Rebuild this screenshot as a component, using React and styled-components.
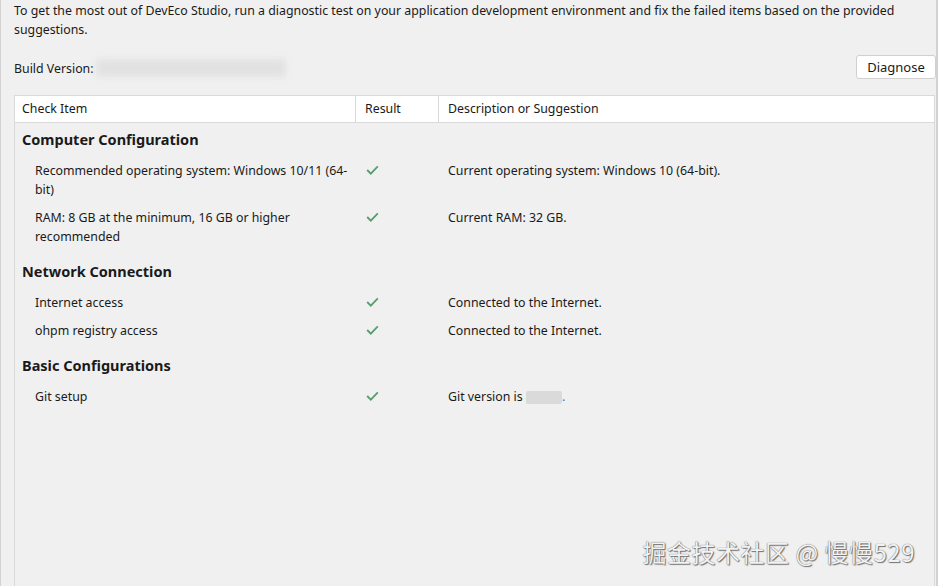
import React from 'react';
import styled, { createGlobalStyle } from 'styled-components';

const GlobalStyle = createGlobalStyle`
  html, body {
    margin: 0;
    padding: 0;
    background: #f0f0f0;
  }
  body {
    font-family: "Noto Sans", "Open Sans", sans-serif;
    font-size: 12.35px;
    color: #1a1a1a;
  }
`;

const Page = styled.div`
  position: relative;
  box-sizing: border-box;
  width: 938px;
  height: 586px;
  background: #f0f0f0;
  border-left: 1px solid #d2d2d2;
  border-right: 2px solid #d2d2d2;
  padding: 0 1px 0 13px;
  display: flex;
  flex-direction: column;
  overflow: hidden;
`;

const Intro = styled.p`
  margin: 0;
  padding-top: 1px;
  line-height: 19px;
  padding-right: 20px;
`;

const Toolbar = styled.div`
  display: flex;
  align-items: center;
  justify-content: space-between;
  margin-top: 16px;
  height: 24px;
`;

const BuildLabel = styled.div`
  display: flex;
  align-items: center;
  gap: 2px;
  padding-top: 2px;
`;

const Blurred = styled.span`
  display: inline-block;
  width: ${p => p.$w}px;
  height: ${p => p.$h}px;
  background: ${p => p.$c || '#dcdcdc'};
  filter: blur(${p => p.$blur || 0}px);
  border-radius: 2px;
  vertical-align: middle;
`;

const Button = styled.button`
  box-sizing: border-box;
  width: 80px;
  height: 24px;
  margin-right: -1px;
  background: #fff;
  border: 1px solid #d0d0d0;
  border-radius: 3px;
  font: inherit;
  font-size: 13px;
  color: #1a1a1a;
  padding: 0 0 1px;
`;

const Table = styled.div`
  margin-top: 16px;
  flex: 1;
  display: flex;
  flex-direction: column;
  border: 1px solid #d9d9d9;
  border-bottom: none;
`;

const Row = styled.div`
  display: grid;
  grid-template-columns: 341px 83px 1fr;
`;

const HeaderRow = styled(Row)`
  background: #fff;
  border-bottom: 1px solid #d9d9d9;
  height: 26px;
`;

const HeaderCell = styled.div`
  display: flex;
  align-items: center;
  padding-left: ${p => p.$pl || 9}px;
  padding-bottom: 1px;
  border-right: ${p => (p.$last ? 'none' : '1px solid #d9d9d9')};
`;

const Body = styled.div`
  padding-top: 5px;
`;

const SectionTitle = styled.div`
  font-weight: 700;
  font-size: 14.5px;
  line-height: 22px;
  padding-left: 7px;
  margin-top: ${p => (p.$first ? 0 : 10)}px;
  margin-bottom: 6px;
`;

const ItemRow = styled(Row)`
  line-height: 19px;
  padding: 4.5px 0;
`;

const ItemCell = styled.div`
  padding-left: 20px;
  padding-right: 6px;
`;

const ResultCell = styled.div`
  display: flex;
  align-items: center;
  height: 19px;
  padding-left: 10px;
`;

const DescCell = styled.div`
  padding-left: 9px;
`;

const Dot = styled.span`
  color: #3b6fd8;
`;

const Watermark = styled.div`
  position: absolute;
  right: 21px;
  bottom: 19px;
  font-family: "Noto Sans CJK SC", "Noto Sans", sans-serif;
  font-size: 24px;
  line-height: 30px;
  color: #f2f2f2;
  letter-spacing: 0.5px;
  text-shadow: 0 0 1px #444, 1px 1px 1px #777;
`;

const Check = () => (
  <svg width="13" height="10" viewBox="0 0 13 10">
    <polyline points="1.2,5 4.8,8.6 11.8,1.4" fill="none" stroke="#5a9c6e" strokeWidth="1.8" />
  </svg>
);

const sections = [
  {
    title: 'Computer Configuration',
    items: [
      ['Recommended operating system: Windows 10/11 (64-bit)', 'Current operating system: Windows 10 (64-bit).'],
      ['RAM: 8 GB at the minimum, 16 GB or higher recommended', 'Current RAM: 32 GB.'],
    ],
  },
  {
    title: 'Network Connection',
    items: [
      ['Internet access', 'Connected to the Internet.'],
      ['ohpm registry access', 'Connected to the Internet.'],
    ],
  },
  {
    title: 'Basic Configurations',
    items: [['Git setup', 'git']],
  },
];

export default function App() {
  return (
    <>
      <GlobalStyle />
      <Page>
        <Intro>
          To get the most out of DevEco Studio, run a diagnostic test on your application development environment and fix the failed items based on the provided suggestions.
        </Intro>
        <Toolbar>
          <BuildLabel>
            Build Version:
            <Blurred $w={190} $h={18} $c="#e2e2e2" $blur={3} />
          </BuildLabel>
          <Button>Diagnose</Button>
        </Toolbar>
        <Table>
          <HeaderRow>
            <HeaderCell $pl={7}>Check Item</HeaderCell>
            <HeaderCell>Result</HeaderCell>
            <HeaderCell $last>Description or Suggestion</HeaderCell>
          </HeaderRow>
          <Body>
            {sections.map((s, i) => (
              <React.Fragment key={s.title}>
                <SectionTitle $first={i === 0}>{s.title}</SectionTitle>
                {s.items.map(([name, desc]) => (
                  <ItemRow key={name}>
                    <ItemCell>{name}</ItemCell>
                    <ResultCell><Check /></ResultCell>
                    <DescCell>
                      {desc === 'git' ? (
                        <>
                          Git version is <Blurred $w={36} $h={13} $c="#dadada" /><Dot>.</Dot>
                        </>
                      ) : desc}
                    </DescCell>
                  </ItemRow>
                ))}
              </React.Fragment>
            ))}
          </Body>
        </Table>
        <Watermark>掘金技术社区 @ 慢慢529</Watermark>
      </Page>
    </>
  );
}
